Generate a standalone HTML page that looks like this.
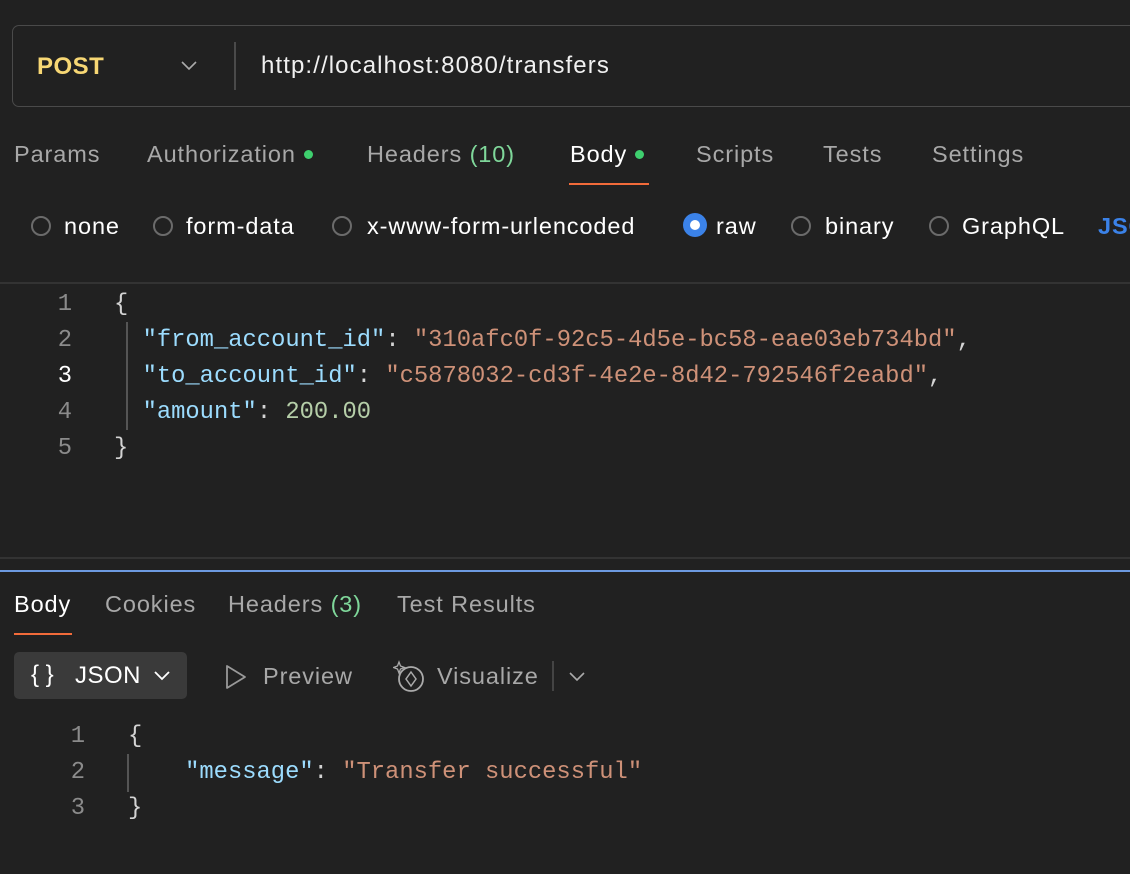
<!DOCTYPE html>
<html><head><meta charset="utf-8"><style>
body{margin:0;width:1130px;height:874px;background:#212121;overflow:hidden;position:relative;font-family:"Liberation Sans",sans-serif;color:#fff}
.a{position:absolute;white-space:nowrap}
.t{font-size:23.5px;letter-spacing:0.9px;line-height:26px;color:#a8a8a8}
.w{color:#fff}
.g{color:#7fd79a}
.dot{display:inline-block;width:9px;height:9px;border-radius:50%;background:#3ecf6e;margin-left:8px;vertical-align:3px}
.r{width:20px;height:20px;border:2px solid #6b6b6b;border-radius:50%;box-sizing:border-box}
.m{font-family:"Liberation Mono",monospace;font-size:23.8px;line-height:36px}
.ln{color:#8b8b8b;text-align:right;width:30px}
.k{color:#9cdcfe}.s{color:#ce9178}.n{color:#b5cea8}.p{color:#d4d4d4}
</style></head><body>
<div class="a" style="left:12px;top:25px;width:1140px;height:80px;border:1.5px solid #4a4a4a;border-radius:7px"></div>
<div class="a" style="left:37px;top:53px;font-size:24px;letter-spacing:0.5px;font-weight:bold;color:#f7d774">POST</div>
<svg class="a" style="left:180px;top:59px" width="18" height="12"><path d="M2 3l7 7 7-7" stroke="#aaa" stroke-width="1.6" fill="none"/></svg>
<div class="a" style="left:234px;top:42px;width:1.5px;height:48px;background:#4a4a4a"></div>
<div class="a" style="left:261px;top:52px;font-size:24px;letter-spacing:1.1px;color:#f0f0f0">http://localhost:8080/transfers</div>

<div class="a t" style="left:14px;top:141px">Params</div>
<div class="a t" style="left:147px;top:141px">Authorization<span class="dot"></span></div>
<div class="a t" style="left:367px;top:141px">Headers <span class="g">(10)</span></div>
<div class="a t w" style="left:570px;top:141px">Body<span class="dot"></span></div>
<div class="a" style="left:569px;top:183px;width:80px;height:2px;background:#f26b3a"></div>
<div class="a t" style="left:696px;top:141px">Scripts</div>
<div class="a t" style="left:823px;top:141px">Tests</div>
<div class="a t" style="left:932px;top:141px">Settings</div>

<div class="a r" style="left:31px;top:216px"></div><div class="a t w" style="left:64px;top:213px">none</div>
<div class="a r" style="left:153px;top:216px"></div><div class="a t w" style="left:186px;top:213px">form-data</div>
<div class="a r" style="left:332px;top:216px"></div><div class="a t w" style="left:367px;top:213px">x-www-form-urlencoded</div>
<div class="a" style="left:683px;top:213px;width:24px;height:24px;border-radius:50%;background:#3b82e8"><div style="margin:7px;width:10px;height:10px;border-radius:50%;background:#fff"></div></div>
<div class="a t w" style="left:716px;top:213px">raw</div>
<div class="a r" style="left:791px;top:216px"></div><div class="a t w" style="left:825px;top:213px">binary</div>
<div class="a r" style="left:929px;top:216px"></div><div class="a t w" style="left:962px;top:213px">GraphQL</div>
<div class="a t" style="left:1098px;top:213px;color:#3b82e8;font-weight:bold">JSON</div>

<div class="a" style="left:0;top:282px;width:1130px;height:2px;background:#333"></div>
<div class="a" style="left:126px;top:322px;width:1.5px;height:108px;background:#555"></div>
<div class="a m ln" style="left:42px;top:287px">1<br>2<br><span class="w">3</span><br>4<br>5</div>
<div class="a m p" style="left:114px;top:287px">{<br>&nbsp;&nbsp;<span class="k">"from_account_id"</span>: <span class="s">"310afc0f-92c5-4d5e-bc58-eae03eb734bd"</span>,<br>&nbsp;&nbsp;<span class="k">"to_account_id"</span>: <span class="s">"c5878032-cd3f-4e2e-8d42-792546f2eabd"</span>,<br>&nbsp;&nbsp;<span class="k">"amount"</span>: <span class="n">200.00</span><br>}</div>

<div class="a" style="left:0;top:557px;width:1130px;height:2px;background:#333"></div>
<div class="a" style="left:0;top:570px;width:1130px;height:2px;background:#6d9ae0"></div>

<div class="a t w" style="left:14px;top:591px">Body</div>
<div class="a" style="left:14px;top:633px;width:58px;height:2px;background:#f26b3a"></div>
<div class="a t" style="left:105px;top:591px">Cookies</div>
<div class="a t" style="left:228px;top:591px">Headers <span class="g">(3)</span></div>
<div class="a t" style="left:397px;top:591px">Test Results</div>

<div class="a" style="left:14px;top:652px;width:173px;height:47px;background:#3a3a3a;border-radius:5px"></div>
<div class="a" style="left:31px;top:661px;font-size:24px;color:#fff">{&nbsp;}</div>
<div class="a" style="left:75px;top:662px;font-size:24px;letter-spacing:0.5px;color:#fff">JSON</div>
<svg class="a" style="left:153px;top:669px" width="18" height="12"><path d="M2 3l7 7 7-7" stroke="#fff" stroke-width="1.8" fill="none"/></svg>
<svg class="a" style="left:224px;top:664px" width="24" height="26"><path d="M3 2v22l18-11z" stroke="#999" stroke-width="1.8" fill="none" stroke-linejoin="round"/></svg>
<div class="a t" style="left:263px;top:663px">Preview</div>
<svg class="a" style="left:393px;top:660px" width="34" height="34"><circle cx="18" cy="19" r="12" stroke="#aaa" stroke-width="1.8" fill="none"/><path d="M18 12l5 7-5 7-5-7z" stroke="#aaa" stroke-width="1.5" fill="none"/><path d="M6 2l1.5 4 4 1.5-4 1.5L6 13 4.5 9 .5 7.5l4-1.5z" fill="#212121" stroke="#aaa" stroke-width="1.3"/></svg>
<div class="a t" style="left:437px;top:663px">Visualize</div>
<div class="a" style="left:552px;top:661px;width:1.5px;height:30px;background:#444"></div>
<svg class="a" style="left:568px;top:670px" width="18" height="12"><path d="M2 3l7 7 7-7" stroke="#aaa" stroke-width="1.6" fill="none"/></svg>

<div class="a" style="left:127px;top:754px;width:1.5px;height:38px;background:#555"></div>
<div class="a m ln" style="left:55px;top:719px">1<br>2<br>3</div>
<div class="a m p" style="left:128px;top:719px">{<br>&nbsp;&nbsp;&nbsp;&nbsp;<span class="k">"message"</span>: <span class="s">"Transfer successful"</span><br>}</div>
</body></html>
